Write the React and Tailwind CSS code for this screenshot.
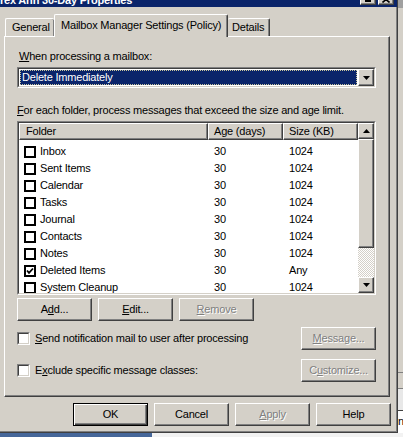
import clsx from "clsx";

// Classic Windows property sheet: "Mailbox Manager Settings (Policy)" tab.

const raised =
  "border border-t-white border-l-white border-r-[#404040] border-b-[#404040] shadow-[inset_-1px_-1px_0_#808080]";
const sunkenOuter =
  "border border-t-[#808080] border-l-[#808080] border-r-white border-b-white";
const sunkenInner =
  "border border-t-[#404040] border-l-[#404040] border-r-[#d4d0c8] border-b-[#d4d0c8]";

const folders = [
  { name: "Inbox", age: "30", size: "1024" },
  { name: "Sent Items", age: "30", size: "1024" },
  { name: "Calendar", age: "30", size: "1024" },
  { name: "Tasks", age: "30", size: "1024" },
  { name: "Journal", age: "30", size: "1024" },
  { name: "Contacts", age: "30", size: "1024" },
  { name: "Notes", age: "30", size: "1024" },
  { name: "Deleted Items", age: "30", size: "Any", checked: true },
  { name: "System Cleanup", age: "30", size: "1024" },
];

function U({ children }) {
  return <span className="underline underline-offset-[1px]">{children}</span>;
}

function Btn({ children, disabled, def, className }) {
  return (
    <div
      className={clsx(
        "flex h-[23px] w-[75px] shrink-0 items-center justify-center bg-[#d4d0c8]",
        def
          ? "border border-black shadow-[inset_1px_1px_0_#fff,inset_-1px_-1px_0_#404040,inset_-2px_-2px_0_#808080]"
          : raised,
        disabled && "text-[#808080] [text-shadow:1px_1px_0_#fff]",
        className
      )}
    >
      {children}
    </div>
  );
}

function Arrow({ up }) {
  return (
    <svg width="7" height="4" viewBox="0 0 7 4">
      <polygon points={up ? "3.5,0 7,4 0,4" : "0,0 7,0 3.5,4"} fill="#000" />
    </svg>
  );
}

function Check() {
  return (
    <div className="flex h-[13px] w-[13px] shrink-0 items-center justify-center border border-t-[#808080] border-l-[#808080] border-r-white border-b-white">
      <div className="h-full w-full border border-t-[#404040] border-l-[#404040] border-r-[#d4d0c8] border-b-[#d4d0c8] bg-white" />
    </div>
  );
}

function ListCheck({ checked }) {
  return (
    <div className="flex h-[12px] w-[12px] shrink-0 items-center justify-center border-2 border-black bg-white">
      {checked && (
        <svg width="8" height="8" viewBox="0 0 8 8">
          <path d="M1 3.5 L3 5.8 L7 1.5" fill="none" stroke="#000" strokeWidth="1.8" />
        </svg>
      )}
    </div>
  );
}

function FolderList() {
  return (
    <div className={clsx("ml-[13px] mt-[4px] h-[174px] w-[359px]", sunkenOuter)}>
      <div className={clsx("flex h-full w-full", sunkenInner)}>
        <div className="flex-1 overflow-hidden bg-white">
          <div className="flex h-[17px]">
            <div className={clsx("flex w-[189px] items-center bg-[#d4d0c8] pl-[6px]", raised)}>Folder</div>
            <div className={clsx("flex w-[75px] items-center bg-[#d4d0c8] pl-[5px]", raised)}>Age (days)</div>
            <div className={clsx("flex w-[75px] items-center bg-[#d4d0c8] pl-[5px]", raised)}>Size (KB)</div>
          </div>
          <div className="pt-[3px]">
            {folders.map((f) => (
              <div key={f.name} className="flex h-[17px] items-center">
                <div className="flex w-[189px] items-center gap-[4px] pl-[5px]">
                  <ListCheck checked={f.checked} />
                  <span>{f.name}</span>
                </div>
                <div className="w-[75px] pl-[6px]">{f.age}</div>
                <div className="w-[75px] pl-[6px]">{f.size}</div>
              </div>
            ))}
          </div>
        </div>
        <div className="flex w-[16px] flex-col">
          <div className={clsx("flex h-[16px] items-center justify-center bg-[#d4d0c8]", raised)}>
            <Arrow up />
          </div>
          <div className={clsx("h-[109px] bg-[#d4d0c8]", raised)} />
          <div className="flex-1 bg-[repeating-conic-gradient(#ffffff_0%_25%,#d4d0c8_0%_50%)] bg-[length:2px_2px]" />
          <div className={clsx("flex h-[16px] items-center justify-center bg-[#d4d0c8]", raised)}>
            <Arrow />
          </div>
        </div>
      </div>
    </div>
  );
}

export default function App() {
  return (
    <div className="flex h-[437px] w-[403px] flex-col overflow-hidden bg-[#d4d0c8] font-['Liberation_Sans',Arial,sans-serif] text-[11px] leading-[13px] tracking-[-0.2px] text-black">
      <div className="flex h-[433px] shrink-0">
        {/* dialog window */}
        <div className="flex w-[398px] shrink-0 flex-col border-r border-b border-[#404040] bg-[#d4d0c8] shadow-[inset_-1px_-1px_0_#808080]">
          <div className="flex h-[7px] shrink-0 items-end gap-[2px] overflow-hidden bg-[#0a246a] pr-[3px]">
            <span className="flex-1 whitespace-nowrap font-bold text-white">rex Ahh 30-Day Properties</span>
            <div className={clsx("mb-[2px] flex h-[14px] w-[16px] shrink-0 items-end justify-center bg-[#d4d0c8] pb-[2px]", raised)}>
              <div className="h-[2px] w-[6px] bg-black" />
            </div>
            <div className={clsx("mb-[2px] flex h-[14px] w-[16px] shrink-0 items-end justify-center bg-[#d4d0c8] pb-[1px]", raised)}>
              <svg width="8" height="7" viewBox="0 0 8 7">
                <path d="M0.5 0.5 L7.5 6.5 M7.5 0.5 L0.5 6.5" stroke="#000" strokeWidth="1.6" />
              </svg>
            </div>
          </div>

          {/* tabs */}
          <div className="ml-[5px] mt-[7px] flex h-[22px] items-end">
            <div className="flex h-[18px] w-[49px] items-center rounded-t-[2px] border-t border-l border-white pl-[6px] shadow-[inset_-1px_0_0_#808080]">
              General
            </div>
            <div className="relative z-10 -mb-px flex h-[23px] w-[174px] items-start rounded-t-[2px] border-t border-l border-r border-t-white border-l-white border-r-[#404040] bg-[#d4d0c8] pl-[6px] pt-[4px] shadow-[inset_-1px_0_0_#808080]">
              Mailbox Manager Settings (Policy)
            </div>
            <div className="flex h-[18px] w-[42px] items-center rounded-t-[2px] border-t border-r border-t-white border-r-[#404040] pl-[4px] shadow-[inset_-1px_0_0_#808080]">
              Details
            </div>
          </div>

          {/* tab panel */}
          <div className="ml-[4px] flex h-[361px] w-[386px] flex-col border border-t-white border-l-white border-r-[#404040] border-b-[#404040] shadow-[inset_-1px_-1px_0_#808080]">
            <div className="ml-[14px] mt-[13px] h-[13px]">
              <U>W</U>hen processing a mailbox:
            </div>
            <div className={clsx("ml-[12px] mt-[4px] h-[21px] w-[359px]", sunkenOuter)}>
              <div className={clsx("flex h-full w-full bg-white", sunkenInner)}>
                <div className="m-[1px] flex flex-1 items-center bg-[#0a246a] pl-[2px] text-white outline-1 -outline-offset-1 outline-dotted outline-[#c8c49c]">
                  Delete Immediately
                </div>
                <div className={clsx("flex w-[16px] items-center justify-center bg-[#d4d0c8]", raised)}>
                  <Arrow />
                </div>
              </div>
            </div>
            <div className="ml-[12px] mt-[16px] h-[13px]">
              <U>F</U>or each folder, process messages that exceed the size and age limit.
            </div>
            <div className="-ml-px">
              <FolderList />
            </div>
            <div className="ml-[12px] mt-[3px] flex gap-[6px]">
              <Btn>
                A<U>d</U>d...
              </Btn>
              <Btn>
                <U>E</U>dit...
              </Btn>
              <Btn disabled>
                <U>R</U>emove
              </Btn>
            </div>
            <div className="ml-[12px] mr-[13px] mt-[6px] flex h-[23px] items-center">
              <Check />
              <span className="ml-[5px] flex-1">
                <U>S</U>end notification mail to user after processing
              </span>
              <Btn disabled>
                <U>M</U>essage...
              </Btn>
            </div>
            <div className="ml-[12px] mr-[13px] mt-[9px] flex h-[23px] items-center">
              <Check />
              <span className="ml-[5px] flex-1">
                E<U>x</U>clude specific message classes:
              </span>
              <Btn disabled>
                C<U>u</U>stomize...
              </Btn>
            </div>
          </div>

          {/* dialog buttons */}
          <div className="mt-[6px] flex w-[391px] justify-end gap-[6px]">
            <Btn def>OK</Btn>
            <Btn>Cancel</Btn>
            <Btn disabled>
              <U>A</U>pply
            </Btn>
            <Btn>Help</Btn>
          </div>
        </div>

        {/* window behind, right edge */}
        <div className="flex flex-1 flex-col bg-[#d4d0c8]">
          <div className="h-[8px] bg-[#a0a0a0]" />
          <div className="h-[364px]" />
          <div className="h-[16px] border-t border-[#808080]" />
          <div className="h-[22px] border-t border-[#808080] bg-[#e8e8e8]" />
          <div className="flex-1 border-t border-[#404040] bg-white pt-[4px] text-[11px]">n</div>
        </div>
      </div>
      <div className="flex flex-1">
        <div className="w-[152px] bg-[#46679a]" />
        <div className="flex-1 bg-[#f2f2f2]" />
      </div>
    </div>
  );
}
